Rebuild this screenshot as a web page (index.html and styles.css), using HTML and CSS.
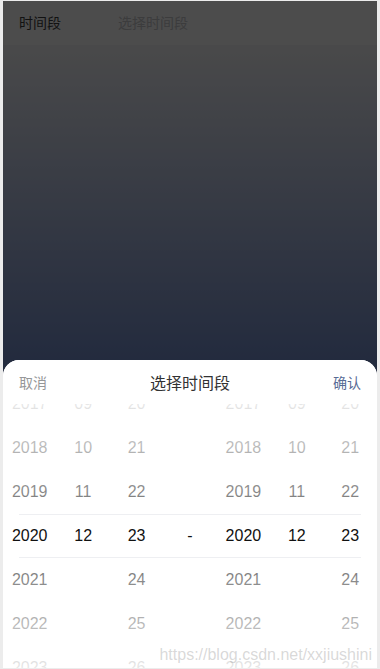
FILE: index.html
```html
<!DOCTYPE html>
<html lang="zh-CN">
<head>
    <meta charset="UTF-8">
    <meta name="viewport" content="width=device-width, initial-scale=1.0">
    <title>选择时间段</title>
    <link rel="stylesheet" href="styles.css">
</head>
<body>
    <div class="screen">
        <div class="field">
            <span class="field-label">时间段</span>
            <span class="field-value">选择时间段</span>
        </div>
        <div class="page-bg"></div>

        <div class="overlay"></div>

        <div class="popup">
            <div class="toolbar">
                <button class="btn-cancel">取消</button>
                <div class="toolbar-title">选择时间段</div>
                <button class="btn-confirm">确认</button>
            </div>
            <div class="columns">
                <ul class="col">
                    <li>2017</li>
                    <li>2018</li>
                    <li>2019</li>
                    <li>2020</li>
                    <li>2021</li>
                    <li>2022</li>
                    <li>2023</li>
                </ul>
                <ul class="col">
                    <li>09</li>
                    <li>10</li>
                    <li>11</li>
                    <li>12</li>
                </ul>
                <ul class="col">
                    <li>20</li>
                    <li>21</li>
                    <li>22</li>
                    <li>23</li>
                    <li>24</li>
                    <li>25</li>
                    <li>26</li>
                </ul>
                <ul class="col col-sep">
                    <li>-</li>
                </ul>
                <ul class="col">
                    <li>2017</li>
                    <li>2018</li>
                    <li>2019</li>
                    <li>2020</li>
                    <li>2021</li>
                    <li>2022</li>
                    <li>2023</li>
                </ul>
                <ul class="col">
                    <li>09</li>
                    <li>10</li>
                    <li>11</li>
                    <li>12</li>
                </ul>
                <ul class="col">
                    <li>20</li>
                    <li>21</li>
                    <li>22</li>
                    <li>23</li>
                    <li>24</li>
                    <li>25</li>
                    <li>26</li>
                </ul>
                <div class="mask"></div>
                <div class="frame"></div>
            </div>
        </div>

        <div class="watermark">https://blog.csdn.net/xxjiushini</div>
    </div>
</body>
</html>
```

FILE: styles.css
```css
* {
    box-sizing: border-box;
}
body {
    margin: 0;
    padding: 1px 3px 1px 3px;
    background: #ececec;
    font-family: "Liberation Sans", "Noto Sans CJK SC", sans-serif;
}
.screen {
    position: relative;
    height: 667px;
    overflow: hidden;
    display: flex;
    flex-direction: column;
    background: #f7f8fa;
}

/* field row under the overlay */
.field {
    display: flex;
    align-items: center;
    height: 44px;
    padding: 0 16px;
    background: #fff;
    font-size: 14px;
    line-height: 24px;
}
.field-label {
    width: 87px;
    margin-right: 12px;
    color: #3c3c3d;
}
.field-value {
    color: #c8c9cc;
}
.page-bg {
    flex: 1;
    background: linear-gradient(#f6f6f8, #7690d0 316px);
}

.overlay {
    position: absolute;
    top: 0;
    left: 0;
    right: 0;
    bottom: 0;
    background: rgba(0, 0, 0, 0.7);
}

/* bottom popup */
.popup {
    position: absolute;
    left: 0;
    right: 0;
    bottom: 0;
    background: #fff;
    border-radius: 16px 16px 0 0;
    overflow: hidden;
}
.toolbar {
    position: relative;
    z-index: 2;
    display: flex;
    align-items: center;
    justify-content: space-between;
    height: 44px;
    background: #fff;
}
.toolbar button {
    height: 100%;
    padding: 0 16px;
    border: none;
    background: transparent;
    font-family: inherit;
    font-size: 14px;
    cursor: pointer;
}
.btn-cancel {
    color: #969799;
}
.btn-confirm {
    color: #576b95;
}
.toolbar-title {
    margin-top: 3px;
    font-size: 16px;
    color: #323233;
    line-height: 20px;
}

.columns {
    position: relative;
    display: flex;
    height: 264px;
}
.col {
    flex: 1;
    margin: 0;
    padding: 0;
    list-style: none;
    transform: translateY(-22px);
}
.col li {
    height: 44px;
    line-height: 44px;
    text-align: center;
    font-size: 16px;
    color: #111;
}
.col-sep {
    padding-top: 132px;
}
.mask {
    position: absolute;
    top: 0;
    left: 0;
    right: 0;
    bottom: 0;
    background-image:
        linear-gradient(180deg, rgba(255, 255, 255, 0.9), rgba(255, 255, 255, 0.4)),
        linear-gradient(0deg, rgba(255, 255, 255, 0.9), rgba(255, 255, 255, 0.4));
    background-position: top, bottom;
    background-size: 100% 110px;
    background-repeat: no-repeat;
    pointer-events: none;
}
.frame {
    position: absolute;
    top: 110px;
    left: 16px;
    right: 16px;
    height: 44px;
    border-top: 1px solid #eeeff2;
    border-bottom: 1px solid #eeeff2;
    pointer-events: none;
}

.watermark {
    position: absolute;
    right: 5px;
    bottom: 4px;
    font-size: 16px;
    line-height: 18px;
    color: rgba(170, 170, 170, 0.45);
    pointer-events: none;
}
```
